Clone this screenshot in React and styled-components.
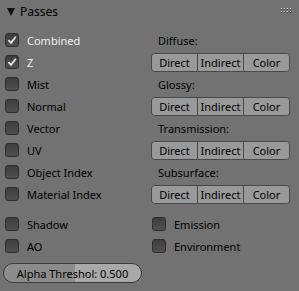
import React from 'react'
import styled, { createGlobalStyle } from 'styled-components'

const Global = createGlobalStyle`
  html, body { margin: 0; padding: 0; background: #727272; }
  body { font-family: "Noto Sans", "DejaVu Sans", sans-serif; }
`

const Panel = styled.div`
  width: 299px;
  height: 291px;
  box-sizing: border-box;
  background: #727272;
  padding: 0 9px 0 3px;
  font-size: 11px;
  color: #000;
`

const Header = styled.div`
  height: 22px;
  display: flex;
  align-items: center;
  gap: 5px;
  padding-left: 4px;
  font-size: 12px;
  position: relative;
  margin-bottom: 7px;
`

const Triangle = styled.span`
  width: 0;
  height: 0;
  border-left: 4px solid transparent;
  border-right: 4px solid transparent;
  border-top: 8px solid #111;
  margin-top: 1px;
`

const Grip = styled.svg`
  position: absolute;
  right: -1px;
  top: 8px;
`

const Columns = styled.div`
  display: grid;
  grid-template-columns: 147px 1fr;
`

const Column = styled.div`
  display: flex;
  flex-direction: column;
`

const Row = styled.div`
  height: 22px;
  display: flex;
  align-items: center;
`

const CheckRow = styled(Row)`
  padding-left: 2px;
  gap: 8px;
  color: ${p => (p.$on ? '#f0f0f0' : '#000')};
`

const Box = styled.span`
  width: 12px;
  height: 12px;
  border: 1px solid #2e2e2e;
  border-radius: 3px;
  background: linear-gradient(#3e3e3e, #505050);
  display: flex;
  align-items: center;
  justify-content: center;
  flex: none;
`

const Label = styled(Row)`
  padding-left: 8px;
`

const ButtonRow = styled(Row)`
  padding-left: 1px;
`

const Segmented = styled.div`
  display: flex;
  width: 139px;
  height: 19px;
  border: 1px solid #494949;
  border-radius: 4px;
  overflow: hidden;
  box-sizing: border-box;
`

const Seg = styled.div`
  flex: 1;
  display: flex;
  align-items: center;
  justify-content: center;
  background: #999;
  border-left: ${p => (p.$first ? 'none' : '1px solid #494949')};
`

const Bottom = styled.div`
  display: grid;
  grid-template-columns: 147px 1fr;
  margin-top: 8px;
`

const Slider = styled.div`
  margin-top: 6px;
  width: 139px;
  height: 20px;
  box-sizing: border-box;
  border: 1px solid #3c3c3c;
  border-radius: 10px;
  background: linear-gradient(90deg, #8c8c8c 0 52%, #a8a8a8 52% 100%);
  display: flex;
  align-items: center;
  justify-content: center;
`

const Check = () => (
  <svg width="10" height="10" viewBox="0 0 10 10">
    <path d="M1.5 5.2 L4 7.8 L8.8 1.8" fill="none" stroke="#e8e8e8" strokeWidth="1.8" />
  </svg>
)

const CheckItem = ({ on, children }) => (
  <CheckRow $on={on}>
    <Box>{on && <Check />}</Box>
    {children}
  </CheckRow>
)

const Buttons = () => (
  <ButtonRow>
    <Segmented>
      <Seg $first>Direct</Seg>
      <Seg>Indirect</Seg>
      <Seg>Color</Seg>
    </Segmented>
  </ButtonRow>
)

const left = ['Combined', 'Z', 'Mist', 'Normal', 'Vector', 'UV', 'Object Index', 'Material Index']
const groups = ['Diffuse:', 'Glossy:', 'Transmission:', 'Subsurface:']

export default function App() {
  return (
    <Panel>
      <Global />
      <Header>
        <Triangle />
        Passes
        <Grip width="10" height="6" viewBox="0 0 10 6">
          {[0, 3, 6, 9].map(x =>
            [0, 3].map(y => (
              <g key={x + '-' + y}>
                <rect x={x} y={y + 1} width="1" height="1" fill="#3a3a3a" />
                <rect x={x} y={y} width="1" height="1" fill="#e0e0e0" />
              </g>
            ))
          )}
        </Grip>
      </Header>
      <Columns>
        <Column>
          {left.map((t, i) => (
            <CheckItem key={t} on={i < 2}>{t}</CheckItem>
          ))}
        </Column>
        <Column>
          {groups.map(g => (
            <React.Fragment key={g}>
              <Label>{g}</Label>
              <Buttons />
            </React.Fragment>
          ))}
        </Column>
      </Columns>
      <Bottom>
        <Column>
          <CheckItem>Shadow</CheckItem>
          <CheckItem>AO</CheckItem>
        </Column>
        <Column>
          <CheckItem>Emission</CheckItem>
          <CheckItem>Environment</CheckItem>
        </Column>
      </Bottom>
      <Slider>Alpha Threshol: 0.500</Slider>
    </Panel>
  )
}
